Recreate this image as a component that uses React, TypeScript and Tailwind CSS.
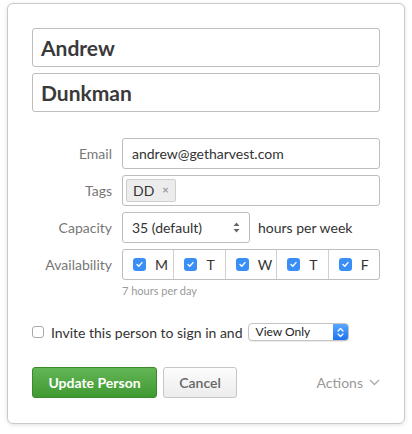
import { useState } from 'react';

const days = ['M', 'T', 'W', 'T', 'F'];

function BlueCheck() {
    return (
        <span className="flex h-[13px] w-[13px] items-center justify-center rounded-[3px] bg-[#3a8ff7]">
            <svg width="9" height="9" viewBox="0 0 9 9" fill="none">
                <path d="M2 4.6 L3.8 6.3 L7 2.6" stroke="#fff" strokeWidth="1.4" strokeLinecap="round" strokeLinejoin="round" />
            </svg>
        </span>
    );
}

function Row({ label, children }: { label: string; children: React.ReactNode }) {
    return (
        <div className="flex items-center">
            <div className="w-[90px] pr-[10px] text-right text-[14px] text-[#777]">{label}</div>
            <div className="flex flex-1 items-center">{children}</div>
        </div>
    );
}

export default function App() {
    const [invite, setInvite] = useState(false);

    return (
        <div className="min-h-[434px] bg-white pt-[3px] pl-[7px] font-['Lato','Liberation_Sans',sans-serif]">
            <div className="w-[398px] rounded-[6px] border border-[#c9c9c9] bg-white px-[24px] pt-[24px] pb-[25px] shadow-[0_1px_4px_rgba(0,0,0,0.12)]">
                <div className="flex flex-col gap-[6px]">
                    <div className="flex h-[39px] items-center rounded-[3px] border border-[#bdbdbd] px-[8px] text-[21px] font-bold text-[#3a3a3a]">
                        Andrew
                    </div>
                    <div className="flex h-[39px] items-center rounded-[3px] border border-[#bdbdbd] px-[8px] text-[21px] font-bold text-[#3a3a3a]">
                        Dunkman
                    </div>
                </div>

                <div className="mt-[26px] flex flex-col gap-[6px]">
                    <Row label="Email">
                        <div className="flex h-[31px] flex-1 items-center rounded-[3px] border border-[#bdbdbd] px-[9px] text-[14px] text-[#333]">
                            andrew@getharvest.com
                        </div>
                    </Row>
                    <Row label="Tags">
                        <div className="flex h-[31px] flex-1 items-center rounded-[3px] border border-[#bdbdbd] px-[3px]">
                            <span className="flex h-[23px] items-center gap-[8px] rounded-[2px] border border-[#cfcfcf] bg-[#ececec] px-[6px] text-[14px] text-[#333]">
                                DD
                                <span className="text-[11px] font-bold text-[#999]">×</span>
                            </span>
                        </div>
                    </Row>
                    <Row label="Capacity">
                        <div className="flex h-[31px] w-[128px] items-center justify-between rounded-[3px] border border-[#bdbdbd] px-[9px] text-[14px] text-[#333]">
                            35 (default)
                            <svg width="7" height="11" viewBox="0 0 7 11">
                                <path d="M3.5 0.5 L6.5 4 L0.5 4 Z M3.5 10.5 L6.5 7 L0.5 7 Z" fill="#666" />
                            </svg>
                        </div>
                        <span className="ml-[8px] text-[14px] text-[#333]">hours per week</span>
                    </Row>
                    <Row label="Availability">
                        <div className="flex h-[31px] flex-1 rounded-[3px] border border-[#bdbdbd]">
                            {days.map((d, i) => (
                                <div
                                    key={i}
                                    className="flex flex-1 items-center gap-[9px] border-l border-[#d0d0d0] pl-[10px] text-[14px] text-[#333] first:border-l-0"
                                >
                                    <BlueCheck />
                                    {d}
                                </div>
                            ))}
                        </div>
                    </Row>
                </div>
                <div className="mt-[3px] pl-[90px] text-[11px] text-[#999]">7 hours per day</div>

                <div className="mt-[22px] flex items-center">
                    <button
                        onClick={() => setInvite(!invite)}
                        className="h-[12px] w-[12px] rounded-[3px] border border-[#a9a9a9] bg-white"
                    />
                    <span className="ml-[7px] text-[14px] text-[#333]">Invite this person to sign in and</span>
                    <div className="ml-[5px] flex h-[18px] w-[101px] items-center overflow-hidden rounded-[4px] border border-[#c4c4c4] bg-white shadow-[0_1px_1px_rgba(0,0,0,0.08)]">
                        <span className="flex-1 pl-[7px] text-[12px] text-[#222]">View Only</span>
                        <span className="flex h-full w-[15px] items-center justify-center bg-gradient-to-b from-[#5aa7ff] to-[#1a72ef]">
                            <svg width="7" height="11" viewBox="0 0 7 11" fill="none">
                                <path d="M1 4 L3.5 1.5 L6 4 M1 7 L3.5 9.5 L6 7" stroke="#fff" strokeWidth="1.2" strokeLinecap="round" strokeLinejoin="round" />
                            </svg>
                        </span>
                    </div>
                </div>

                <div className="mt-[24px] flex items-center">
                    <button className="h-[31px] w-[125px] rounded-[3px] border border-[#3a8a2c] bg-gradient-to-b from-[#63b555] to-[#3f9a31] text-[14px] font-bold text-white">
                        Update Person
                    </button>
                    <button className="ml-[6px] h-[31px] w-[74px] rounded-[3px] border border-[#c6c6c6] bg-gradient-to-b from-[#fcfcfc] to-[#ececec] text-[14px] font-semibold text-[#666]">
                        Cancel
                    </button>
                    <div className="ml-auto flex items-center gap-[6px] text-[14px] text-[#999]">
                        Actions
                        <svg width="11" height="7" viewBox="0 0 11 7" fill="none">
                            <path d="M1 1 L5.5 5.5 L10 1" stroke="#aaa" strokeWidth="1.3" />
                        </svg>
                    </div>
                </div>
            </div>
        </div>
    );
}
